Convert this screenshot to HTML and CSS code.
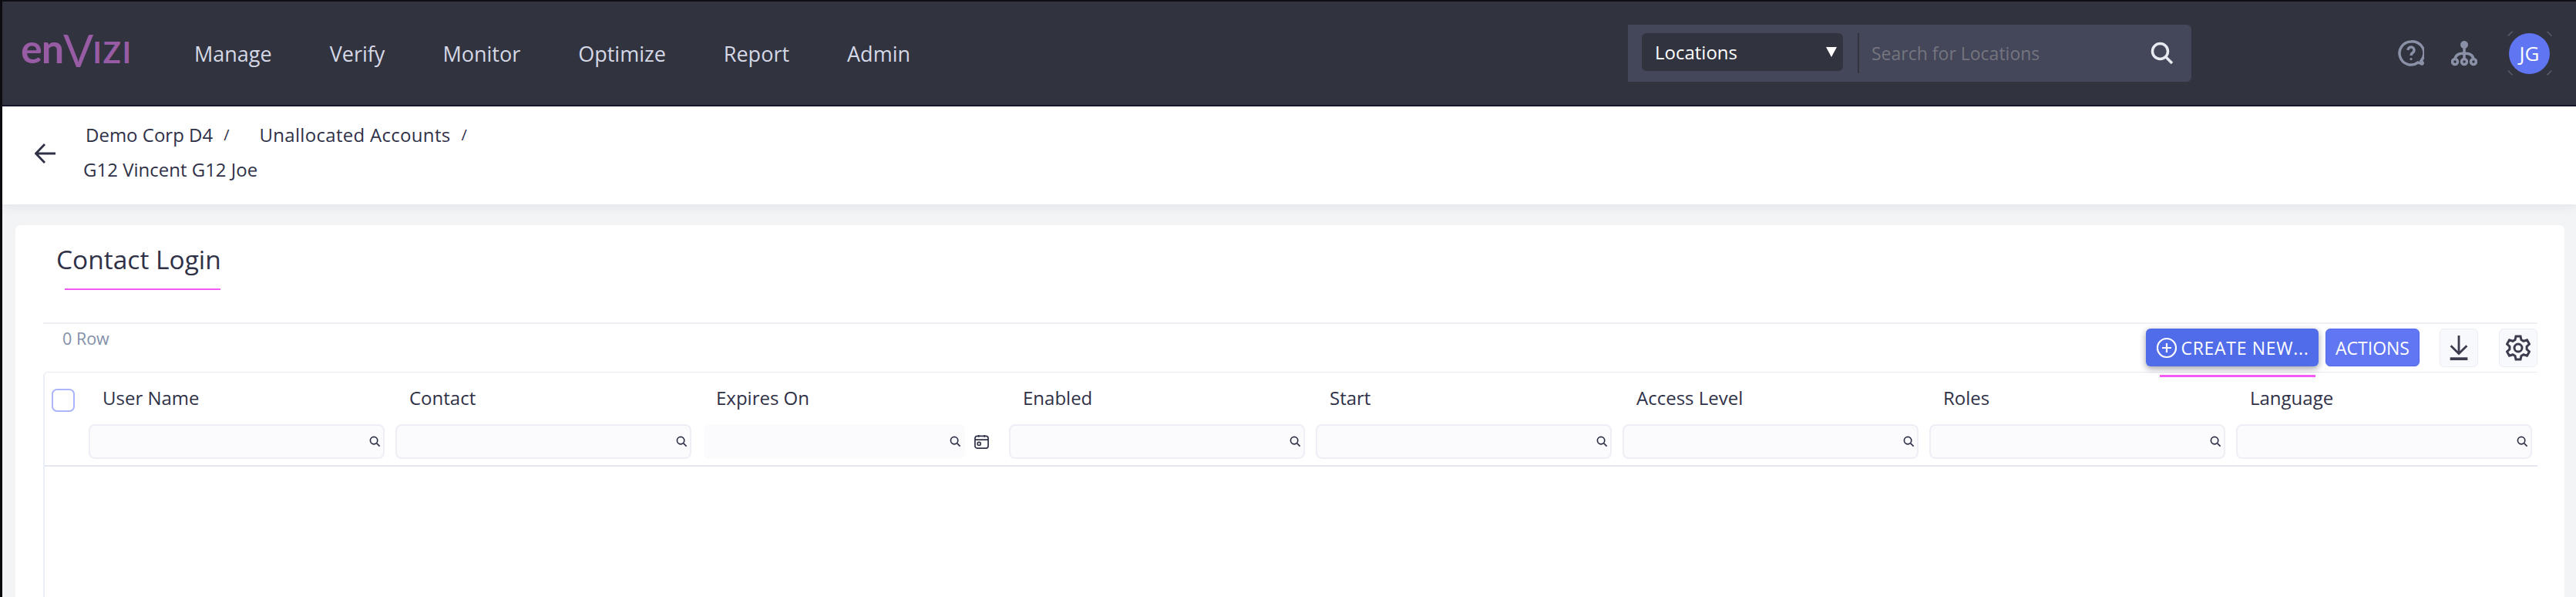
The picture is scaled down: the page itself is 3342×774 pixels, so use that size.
FILE: index.html
```html
<!DOCTYPE html>
<html lang="en">
<head>
    <meta charset="UTF-8">
    <title>Contact Login</title>
    <link rel="stylesheet" href="styles.css">
</head>
<body>
    <header class="topbar">
        <div class="logo"><span class="logo-en">en</span><span class="logo-v">V</span><span class="logo-izi">IZI</span></div>
        <nav class="main-nav">
            <a>Manage</a>
            <a>Verify</a>
            <a>Monitor</a>
            <a>Optimize</a>
            <a>Report</a>
            <a>Admin</a>
        </nav>
        <div class="search-box">
            <div class="search-select">
                <span>Locations</span>
                <span class="caret"></span>
            </div>
            <div class="search-input">
                <span>Search for Locations</span>
                <svg class="search-icon" viewBox="0 0 30 30"><circle cx="12.500" cy="12.500" r="10" /><path d="M20 20l8 8" /></svg>
            </div>
        </div>
        <div class="top-icons">
            <svg class="top-icon" viewBox="0 0 34 34">
                <path d="M17 2a15 15 0 1 0 9 27l5 2c1 0 1.500-1 1-2l-2-2a15 15 0 0 0-13-25z" />
                <path d="M13 13a4 4 0 1 1 6 3.500c-1.500 1-2 1.500-2 3.500" />
                <circle class="dot" cx="17" cy="24.500" r="1.600" />
            </svg>
            <svg class="top-icon org" viewBox="0 0 34 34">
                <circle class="dot" cx="17" cy="6" r="5" />
                <path d="M17 10v16M5 26c0-7 5-9 12-9s12 2 12 9" />
                <circle cx="5" cy="28" r="3.500" />
                <circle cx="17" cy="28" r="3.500" />
                <circle cx="29" cy="28" r="3.500" />
            </svg>
            <div class="avatar">
                JG
                <svg class="avatar-ring" viewBox="0 0 76 76"><circle cx="38" cy="38" r="36" /></svg>
            </div>
        </div>
    </header>

    <section class="breadcrumb-bar">
        <svg class="back-arrow" viewBox="0 0 28 26"><path d="M27 13H2M13 1L1.500 13 13 25" /></svg>
        <div class="crumbs">
            <div class="crumb-row">
                <a>Demo Corp D4</a><span class="sep">/</span>
                <a class="crumb-second">Unallocated Accounts</a><span class="sep">/</span>
            </div>
            <div class="crumb-current">G12 Vincent G12 Joe</div>
        </div>
    </section>

    <main class="content">
        <div class="card">
            <h1 class="card-title">Contact Login</h1>

            <div class="toolbar">
                <span class="row-count">0 Row</span>
                <div class="toolbar-actions">
                    <button class="btn btn-create">
                        <svg viewBox="0 0 28 28"><circle cx="14" cy="14" r="12" /><path d="M14 8v12M8 14h12" /></svg>
                        CREATE NEW...
                    </button>
                    <button class="btn btn-actions">ACTIONS</button>
                    <button class="icon-btn icon-download">
                        <svg viewBox="0 0 26 36"><path d="M13 1v25M2 15l11 11 11-11" /><path class="thick" d="M1 33h24" /></svg>
                    </button>
                    <button class="icon-btn">
                        <svg viewBox="0 0 32 34"><path d="M13 2h6l1 4.500 3 1.800 4.500-1.400 3 5.200-3.400 3.100v3.600l3.400 3.100-3 5.200-4.500-1.400-3 1.800-1 4.500h-6l-1-4.500-3-1.800-4.500 1.400-3-5.200 3.400-3.100v-3.600L1.500 12.100l3-5.200L9 8.300l3-1.800z" /><circle cx="16" cy="17" r="5" /></svg>
                    </button>
                </div>
            </div>

            <div class="table">
                <div class="table-head">
                    <div class="check-cell"><span class="checkbox"></span></div>
                    <div class="col">
                        <div class="col-name">User Name</div>
                        <div class="filter"><svg viewBox="0 0 16 16"><circle cx="6.500" cy="6.500" r="5" /><path d="M10.500 10.500l4 4" /></svg></div>
                    </div>
                    <div class="col">
                        <div class="col-name">Contact</div>
                        <div class="filter"><svg viewBox="0 0 16 16"><circle cx="6.500" cy="6.500" r="5" /><path d="M10.500 10.500l4 4" /></svg></div>
                    </div>
                    <div class="col">
                        <div class="col-name">Expires On</div>
                        <div class="filter-date">
                            <div class="filter filter-plain"><svg viewBox="0 0 16 16"><circle cx="6.500" cy="6.500" r="5" /><path d="M10.500 10.500l4 4" /></svg></div>
                            <svg class="calendar" viewBox="0 0 20 20"><rect x="1" y="2.500" width="18" height="16.500" rx="3" /><path d="M1 7.500h18M6 1v3M14 1v3" /><rect x="4.500" y="11" width="4" height="4" rx="1" /></svg>
                        </div>
                    </div>
                    <div class="col">
                        <div class="col-name">Enabled</div>
                        <div class="filter"><svg viewBox="0 0 16 16"><circle cx="6.500" cy="6.500" r="5" /><path d="M10.500 10.500l4 4" /></svg></div>
                    </div>
                    <div class="col">
                        <div class="col-name">Start</div>
                        <div class="filter"><svg viewBox="0 0 16 16"><circle cx="6.500" cy="6.500" r="5" /><path d="M10.500 10.500l4 4" /></svg></div>
                    </div>
                    <div class="col">
                        <div class="col-name">Access Level</div>
                        <div class="filter"><svg viewBox="0 0 16 16"><circle cx="6.500" cy="6.500" r="5" /><path d="M10.500 10.500l4 4" /></svg></div>
                    </div>
                    <div class="col">
                        <div class="col-name">Roles</div>
                        <div class="filter"><svg viewBox="0 0 16 16"><circle cx="6.500" cy="6.500" r="5" /><path d="M10.500 10.500l4 4" /></svg></div>
                    </div>
                    <div class="col">
                        <div class="col-name">Language</div>
                        <div class="filter"><svg viewBox="0 0 16 16"><circle cx="6.500" cy="6.500" r="5" /><path d="M10.500 10.500l4 4" /></svg></div>
                    </div>
                </div>
            </div>
        </div>
    </main>
</body>
</html>
```

FILE: styles.css
```css
* {
    box-sizing: border-box;
}

html, body {
    height: 100%;
}

body {
    margin: 0;
    font-family: "Open Sans", "Noto Sans", sans-serif;
    color: #2f3147;
    background-color: #f3f4f6;
    border-left: 3px solid #0c0c10;
    overflow: hidden;
}

.topbar {
    display: flex;
    align-items: center;
    height: 138px;
    background-color: #31333f;
    border-top: 2px solid #0e0e14;
    border-bottom: 2px solid #14142a;
    padding-left: 24px;
}

.logo {
    flex: none;
    width: 225px;
    font-family: Lato, sans-serif;
    font-weight: 700;
    line-height: 44px;
    color: #985ca5;
    white-space: nowrap;
}

.logo-en {
    font-size: 52px;
    letter-spacing: -1px;
}

.logo-v {
    font-size: 58px;
    font-weight: 400;
    letter-spacing: -1px;
    vertical-align: -5px;
}

.logo-izi {
    font-size: 38px;
    letter-spacing: 2px;
}

.main-nav {
    display: flex;
    flex: none;
    gap: 75px;
    width: 1860px;
    font-size: 27px;
}

.main-nav a {
    color: #d5d8e6;
}

.search-box {
    display: flex;
    flex: none;
    align-items: center;
    width: 731px;
    height: 74px;
    padding-left: 18px;
    background-color: #444659;
    border-radius: 0 6px 6px 0;
}

.search-select {
    display: flex;
    justify-content: space-between;
    align-items: center;
    width: 261px;
    height: 49px;
    margin-bottom: 3px;
    padding: 0 8px 0 17px;
    font-size: 24px;
    color: #fff;
    background-color: #31333f;
    border-radius: 6px;
}

.caret {
    border-top: 13px solid #fff;
    border-left: 7px solid transparent;
    border-right: 7px solid transparent;
}

.search-input {
    display: flex;
    justify-content: space-between;
    align-items: center;
    width: 433px;
    height: 52px;
    margin-left: 19px;
    padding: 0 23px 0 16px;
    font-size: 23px;
    color: #74757f;
    border-left: 2px solid #31333f;
}

.search-icon {
    width: 30px;
    height: 30px;
    fill: none;
    stroke: #e8eaf2;
    stroke-width: 3.5;
}

.top-icons {
    display: flex;
    flex: none;
    align-items: center;
    margin-left: 268px;
}

.top-icon {
    width: 34px;
    height: 34px;
    fill: none;
    stroke: #8a90a6;
    stroke-width: 3.5;
}

.top-icon .dot {
    fill: #8a90a6;
    stroke: none;
}

.top-icon.org {
    margin-left: 35px;
}

.avatar {
    position: relative;
    display: flex;
    justify-content: center;
    align-items: center;
    width: 53px;
    height: 53px;
    margin-left: 41px;
    font-size: 26px;
    color: #fff;
    background-color: #5f75f2;
    border-radius: 50%;
}

.avatar-ring {
    position: absolute;
    top: -11.500px;
    left: -11.500px;
    width: 76px;
    height: 76px;
    fill: none;
    stroke: #5b5d6c;
    stroke-width: 1.5;
    stroke-dasharray: 8 48.500;
    stroke-dashoffset: -24.270;
}

.breadcrumb-bar {
    display: flex;
    align-items: center;
    height: 127px;
    padding-left: 42px;
    background-color: #fff;
    box-shadow: 0 2px 14px rgba(60, 60, 90, 0.1);
}

.back-arrow {
    width: 28px;
    height: 26px;
    margin-bottom: 6px;
    fill: none;
    stroke: #2f3147;
    stroke-width: 2.8;
}

.crumbs {
    margin-left: 35px;
    padding-bottom: 8px;
    font-size: 24px;
}

.crumb-row {
    display: flex;
    margin-left: 3px;
    line-height: 32px;
}

.sep {
    margin-left: 14px;
    font-size: 20px;
}

.crumb-second {
    margin-left: 39px;
    letter-spacing: 0.300px;
}

.crumb-current {
    margin-top: 13px;
    line-height: 32px;
}

.content {
    padding: 27px 15px 0 17px;
}

.card {
    height: 500px;
    padding: 0 35px 0 36px;
    background-color: #fff;
    border-radius: 6px 6px 0 0;
}

.card-title {
    width: 233px;
    height: 84px;
    margin: 0 0 42px;
    padding: 22px 0 0 17px;
    font-size: 33.500px;
    font-weight: 400;
    line-height: 44px;
    white-space: nowrap;
    background: linear-gradient(#f25cf5, #f25cf5) 28px 82px / 202px 3px no-repeat;
}

.toolbar {
    display: flex;
    justify-content: space-between;
    height: 64px;
    border-top: 2px solid #eff0f5;
}

.row-count {
    margin: 5px 0 0 25px;
    font-size: 21.500px;
    line-height: 28px;
    color: #8290aa;
}

.toolbar-actions {
    display: flex;
    align-items: flex-start;
    padding-top: 6px;
}

.btn {
    height: 49px;
    padding: 0;
    font-family: inherit;
    font-size: 23px;
    color: #fff;
    border-radius: 6px;
}

.btn-create {
    position: relative;
    display: flex;
    align-items: center;
    justify-content: center;
    gap: 5px;
    width: 224px;
    letter-spacing: 0.700px;
    white-space: nowrap;
    background-color: #506ce9;
    border: none;
    box-shadow: 0 3px 8px rgba(20, 20, 40, 0.4);
}

.btn-create::after {
    content: "";
    position: absolute;
    left: 18px;
    right: 4px;
    bottom: -14px;
    height: 3px;
    background-color: #f25cf5;
}

.btn-create svg {
    flex: none;
    width: 28px;
    height: 28px;
    fill: none;
    stroke: #fff;
    stroke-width: 2.2;
}

.btn-actions {
    width: 122px;
    margin-left: 9px;
    background-color: #6176f3;
    border: 1px solid #4f68ee;
}

.icon-btn {
    display: flex;
    justify-content: center;
    align-items: center;
    width: 50px;
    height: 50px;
    margin-left: 27px;
    padding: 0;
    background-color: #f8f9fd;
    border: 1px solid #eceef5;
    border-radius: 6px;
}

.icon-btn svg {
    height: 34px;
    width: 32px;
    fill: none;
    stroke: #3b3d4f;
    stroke-width: 3;
}

.icon-btn .thick {
    stroke-width: 4;
}

.icon-download {
    margin-left: 26px;
}

.table {
    height: 300px;
    border-top: 1px solid #e9eaf3;
    border-left: 2px solid #eceef5;
    border-radius: 6px 0 0 0;
}

.table-head {
    display: grid;
    grid-template-columns: 50px repeat(8, 1fr);
    height: 122px;
    border-bottom: 2px solid #e6e7f1;
}

.check-cell {
    padding: 21px 0 0 9px;
}

.checkbox {
    display: block;
    width: 30px;
    height: 30px;
    background-color: #fff;
    border: 2px solid #aab5fa;
    border-radius: 7px;
}

.col {
    padding: 0 7px;
}

.col-name {
    height: 67px;
    padding: 17px 0 0 18px;
    font-size: 24px;
    line-height: 32px;
}

.filter {
    display: flex;
    justify-content: flex-end;
    align-items: center;
    height: 45px;
    padding-right: 3px;
    background-color: #fbfbfe;
    border: 2px solid #eeeff6;
    border-radius: 8px;
}

.filter svg {
    width: 15px;
    height: 15px;
    fill: none;
    stroke: #2f3147;
    stroke-width: 1.8;
}

.filter-date {
    display: flex;
    align-items: center;
    gap: 12px;
    margin-left: 2px;
    margin-right: 12px;
}

.filter-plain {
    flex: 1;
    border-color: #fbfbfe;
}

.calendar {
    width: 19px;
    height: 19px;
    fill: none;
    stroke: #2f3147;
    stroke-width: 1.8;
}
```
